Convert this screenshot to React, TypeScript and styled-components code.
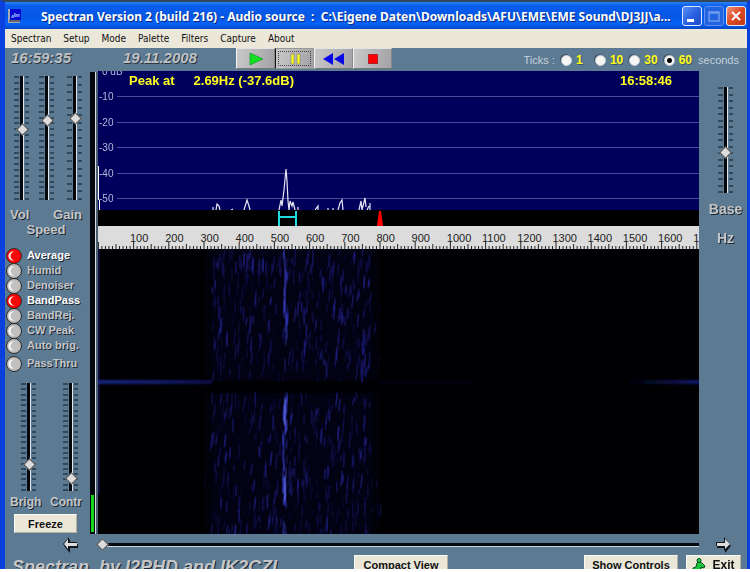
import React from "react";
import styled, { createGlobalStyle, css } from "styled-components";

const panel = "#5c7a92";
const sans = `"Liberation Sans", Arial, sans-serif`;

const GlobalStyle = createGlobalStyle`
  * { box-sizing: border-box; }
  body { margin: 0; background: #fff; font-family: ${sans}; }
  button, input { margin: 0; font: inherit; }
`;

const Window = styled.main`
  display: flex;
  flex-direction: column;
  height: calc(100vh - 3px);
  min-height: 540px;
  overflow: hidden;
  background: ${panel};
  border-style: solid;
  border-color: #33475c #0a3fd8 transparent #0a3fe0;
  border-width: 2px 3px 0 5px;
`;

const TitleBar = styled.header`
  display: flex;
  flex: none;
  align-items: center;
  height: 27px;
  padding: 0 1px 0 3px;
  color: #fff;
  background: linear-gradient(#2a80f4, #0a5eee 4px, #0456e4 14px, #0662f6 22px, #0446c8);
`;

const Title = styled.h1`
  flex: 1;
  min-width: 0;
  margin: 0 8px 0 19px;
  padding-top: 2px;
  overflow: hidden;
  font: bold 12px/20px "Noto Sans", "Open Sans", sans-serif;
  white-space: pre;
  text-overflow: ellipsis;
  text-shadow: 1px 1px 0 #0a2a80;
`;

const CaptionButton = styled.button<{ $kind?: "close" | "dim" }>`
  display: grid;
  place-items: center;
  width: 20px;
  height: 20px;
  margin-left: 2px;
  padding: 0;
  border: 1px solid ${(p) => (p.$kind === "dim" ? "#5f92ee" : "#dfe9fb")};
  border-radius: 3px;
  background: ${(p) =>
    p.$kind === "close"
      ? "linear-gradient(135deg, #f0907a, #dc4a24 50%, #c03a14)"
      : p.$kind === "dim"
      ? "#2263e0"
      : "linear-gradient(135deg, #5b8ef4, #2a62e2 50%, #1c4cc8)"};
`;

const MenuBar = styled.nav`
  display: flex;
  flex: none;
  gap: 12px;
  height: 19px;
  padding-left: 6px;
  background: #ebe8da;
`;

const MenuItem = styled.button`
  padding: 0;
  border: 0;
  color: #111;
  background: none;
  font: 10px/18px "DejaVu Sans Condensed", "DejaVu Sans", sans-serif;
`;

const ToolBar = styled.div`
  display: grid;
  grid-template-columns: 112px 119px auto 1fr;
  flex: none;
  height: 23px;
  align-items: start;
`;

const Clock = styled.time`
  padding-left: 6px;
  color: #bfc1c4;
  font: italic bold 15px/20px ${sans};
  text-shadow: 1px 1px 0 #2a3642;
`;

const Transport = styled.div`
  display: flex;
`;

const TransportButton = styled.button<{ $down?: boolean }>`
  display: grid;
  place-items: center;
  width: 39px;
  height: 21px;
  padding: 0;
  border: 1px solid;
  border-color: ${(p) => (p.$down ? "#999 #999 #999 #111" : "#e4e4e4 #888 #777 #f4f4f4")};
  background: linear-gradient(100deg, #c9c9ca, #b2b1b3 60%, #a3a2a5);
  outline: ${(p) => (p.$down ? "1px dotted #444" : "none")};
  outline-offset: -4px;
`;

const TickGroup = styled.fieldset`
  display: flex;
  align-items: center;
  justify-content: flex-end;
  gap: 6px;
  height: 24px;
  margin: 0;
  padding: 0 8px 0 0;
  border: 0;
  color: #c3d0de;
  font-size: 11px;
`;

const TickOption = styled.label`
  display: flex;
  align-items: center;
  gap: 4px;
  min-width: 28px;
  color: #ffff18;
  font: bold 12px/14px ${sans};
  text-shadow: 1px 1px 0 #44566a;
`;

const Radio = styled.input`
  appearance: none;
  width: 11px;
  height: 11px;
  border: 1px solid #c9d0d6;
  border-radius: 50%;
  background: #f6f6f4;
  box-shadow: -1px -1px 0 #44586a;
  &:checked {
    background: radial-gradient(circle, #000 2px, #f6f6f4 3px);
  }
`;

const Body = styled.div`
  display: grid;
  grid-template-columns: 85px 8px minmax(0, 1fr) 48px;
  grid-template-rows: minmax(0, 1fr) 21px;
  flex: 1;
  min-height: 0;
`;

const SidePanel = styled.section`
  display: flex;
  flex-direction: column;
  min-width: 0;
  padding-top: 5px;
`;

const embossed = css`
  color: #c4c6c8;
  text-shadow: 1px 1px 0 #1c2630;
`;

const TopSliders = styled.div`
  display: grid;
  grid-template-columns: 25px 28px 16px;
  padding-left: 9px;
`;

const BottomSliders = styled.div`
  display: grid;
  grid-template-columns: 42px 16px;
  margin-top: 12px;
  padding-left: 16px;
`;

const LabelRow = styled.div<{ $size?: number; $top?: number }>`
  display: flex;
  justify-content: space-between;
  margin-top: ${(p) => p.$top ?? 0}px;
  padding: 0 8px 0 5px;
  font: bold ${(p) => p.$size ?? 13}px/15px ${sans};
  ${embossed}
`;

const Centered = styled(LabelRow)`
  justify-content: center;
  padding: 0 3px 0 0;
`;

const SliderBox = styled.div<{ $height: number }>`
  display: grid;
  width: 16px;
  height: ${(p) => p.$height}px;
  > * {
    grid-area: 1 / 1;
  }
`;

const thumb = css`
  appearance: none;
  width: 9px;
  height: 9px;
  border: 1px solid #454545;
  background: #dcdcdc;
  transform: rotate(45deg);
`;

const VerticalRange = styled.input`
  appearance: none;
  width: 16px;
  height: 100%;
  background: linear-gradient(90deg, transparent 6px, #05080c 6px, #05080c 9px, #e0e4e8 9px, #e0e4e8 10px, transparent 10px);
  writing-mode: vertical-lr;
  direction: rtl;
  &::-webkit-slider-thumb {
    ${thumb}
  }
`;

const HorizontalRange = styled.input`
  appearance: none;
  align-self: center;
  width: 100%;
  height: 12px;
  background: linear-gradient(transparent 4px, #05080c 4px, #05080c 7px, #d0d6dc 7px, #d0d6dc 8px, transparent 8px);
  &::-webkit-slider-thumb {
    ${thumb}
  }
`;

const LedList = styled.div`
  display: flex;
  flex-direction: column;
  margin-top: 11px;
`;

const LedLabel = styled.label<{ $spaced?: boolean }>`
  display: flex;
  align-items: center;
  gap: 5px;
  height: 15px;
  margin-top: ${(p) => (p.$spaced ? 3 : 0)}px;
  padding-left: 1px;
  font: bold 11px/15px ${sans};
  white-space: nowrap;
  ${embossed}
  &:has(:checked) {
    color: #fff;
  }
`;

const Led = styled.input`
  appearance: none;
  flex: none;
  width: 16px;
  height: 16px;
  border: 1px solid #2c2c2c;
  border-radius: 50%;
  background: radial-gradient(circle at 8px 7px, #c2c1c0 4px, transparent 5px), radial-gradient(circle at 6px 7px, #fff 4px, #bdbcbb 5px);
  &:checked {
    background: radial-gradient(circle at 8px 7px, #f80808 4px, transparent 5px), radial-gradient(circle at 6px 7px, #fff 4px, #f00 5px);
  }
`;

const PlainButton = styled.button`
  display: flex;
  align-items: center;
  justify-content: center;
  gap: 6px;
  height: 19px;
  padding: 0;
  border: 1px solid;
  border-color: #fbfaf2 #b5b2a4 #b5b2a4 #fbfaf2;
  color: #111;
  background: #eae7d8;
  font: bold 11px/16px ${sans};
`;

const FreezeButton = styled(PlainButton)`
  width: 63px;
  margin: 4px 0 0 9px;
`;

const Meter = styled.div`
  display: flex;
  align-items: flex-end;
  margin-top: 1px;
  padding: 0 4px 2px 1px;
  background: linear-gradient(90deg, #04080c 5px, #d6dce0 5px, #d6dce0 6px, #4a5c70 6px);
`;

const MeterLevel = styled.div`
  width: 3px;
  height: 37px;
  background: #14d81c;
`;

const Display = styled.section`
  display: flex;
  flex-direction: column;
  min-width: 0;
  background: #000;
`;

const Spectrum = styled.div`
  position: relative;
  flex: none;
  height: 139px;
  overflow: hidden;
  background: #00005c;
`;

const Readout = styled.div`
  position: absolute;
  inset: 2px 27px auto 31px;
  display: flex;
  gap: 19px;
  color: #ffff20;
  font: bold 13px/15px ${sans};
`;

const PushRight = styled.span`
  margin-left: auto;
`;

const Drawing = styled.svg<{ $height?: number }>`
  display: block;
  flex: ${(p) => (p.$height ? "none" : "1")};
  width: 100%;
  min-height: 0;
  height: ${(p) => (p.$height ? p.$height + "px" : "100%")};
  overflow: hidden;
`;

const RightPanel = styled.section`
  display: flex;
  flex-direction: column;
  align-items: center;
  padding: 16px 0 0 5px;
`;

const BaseLabel = styled.div<{ $top: number }>`
  margin-top: ${(p) => p.$top}px;
  font: bold 14px/17px ${sans};
  ${embossed}
`;

const ScrollButton = styled.button<{ $end?: boolean }>`
  justify-self: ${(p) => (p.$end ? "center" : "end")};
  align-self: center;
  display: grid;
  width: 18px;
  height: 18px;
  margin-right: ${(p) => (p.$end ? 0 : 10)}px;
  padding: 0;
  border: 0;
  background: none;
`;

const ScrollTrack = styled.div`
  display: flex;
  grid-column: 3;
`;

const Footer = styled.footer`
  display: grid;
  grid-template-columns: 349px 94px 1fr auto auto;
  flex: none;
  align-items: start;
  height: 14px;
  overflow: hidden;
`;

const Credits = styled.div`
  padding-left: 7px;
  font: italic bold 18px/24px ${sans};
  white-space: nowrap;
  ${embossed}
`;

const ControlsButton = styled(PlainButton)`
  grid-column: 4;
  width: 94px;
  margin-right: 8px;
`;

const ExitButton = styled(PlainButton)`
  width: 55px;
  margin-right: 6px;
  font-size: 12px;
`;

type SliderProps = { name: string; value: number; height: number; ticks: number };

function Slider({ name, value, height, ticks }: SliderProps) {
  return (
    <SliderBox $height={height}>
      <svg width="16" height={height} aria-hidden="true">
        {Array.from({ length: ticks }, (_, i) => {
          const y = Math.round((i * (height - 2)) / (ticks - 1));
          return <path key={i} d={`M0 ${y + 1}h5M11 ${y + 1}h4`} stroke="#20384a" strokeWidth="1.4" />;
        })}
      </svg>
      <VerticalRange type="range" min="0" max="100" defaultValue={value} aria-label={name} />
    </SliderBox>
  );
}

function makeRandom(seed: number) {
  let s = seed;
  return () => {
    s = (s * 16807) % 2147483647;
    return s / 2147483647;
  };
}

const random = makeRandom(216);
const streaks = Array.from({ length: 820 }, () => {
  const edge = random() < 0.12;
  const x = (edge ? 104 : 114) + random() * (edge ? 180 : 160);
  const y = random() * 285;
  const length = 4 + random() * 11;
  return { x, y, length, slant: random() * 2 - 1.6, opacity: 0.1 + random() * random() * (edge ? 0.3 : 0.55) };
}).filter((s) => s.y + s.length < 134 || s.y > 143);

const signal = Array.from({ length: 75 }, (_, i) => {
  const y = i * 3.9;
  const bright = (y > 148 && y < 178) || (y > 226 && y < 250);
  return { x: 185 + random() * 4, y, length: 5 + random() * 7, opacity: bright ? 0.6 : 0.15 + random() * 0.35 };
}).filter((s) => (s.y < 88 || s.y > 144) && (s.y < 254 || s.y > 272));

function Waterfall() {
  return (
    <Drawing viewBox="0 0 601 285" preserveAspectRatio="none" role="img" aria-label="Waterfall">
      <defs>
        <filter id="soft">
          <feGaussianBlur stdDeviation="0.6 1.2" />
        </filter>
        <linearGradient id="fadeOut">
          <stop offset="0" stopColor="#1a2480" />
          <stop offset="0.6" stopColor="#101a64" />
          <stop offset="1" stopColor="#0a0e48" />
        </linearGradient>
        <linearGradient id="fadeIn">
          <stop offset="0" stopColor="#000" />
          <stop offset="1" stopColor="#10186c" />
        </linearGradient>
        <linearGradient id="haze">
          <stop offset="0" stopColor="#000003" />
          <stop offset="0.08" stopColor="#020212" />
          <stop offset="0.92" stopColor="#020212" />
          <stop offset="1" stopColor="#000003" />
        </linearGradient>
      </defs>
      <rect width="601" height="285" fill="#000003" />
      <rect x="104" width="180" height="132" fill="url(#haze)" />
      <rect x="104" y="144" width="180" height="141" fill="url(#haze)" />
      <g filter="url(#soft)" strokeLinecap="round">
        {streaks.map((s, i) => (
          <path key={i} d={`M${s.x} ${s.y}l${s.slant} ${s.length}`} stroke="#2c2cb4" strokeWidth="1.8" opacity={s.opacity} />
        ))}
        {signal.map((s, i) => (
          <path key={i} d={`M${s.x} ${s.y}v${s.length}`} stroke="#3c44d0" strokeWidth="2" opacity={s.opacity} />
        ))}
        <path d="M187 150v26M187 228v22" stroke="#5866dc" strokeWidth="1.4" />
        <path d="M1 0v245" stroke="#0c0c50" strokeWidth="1.5" />
        <rect x="0" y="131" width="114" height="4" fill="url(#fadeOut)" />
        <rect x="525" y="131" width="76" height="4" fill="url(#fadeIn)" />
        <path d="M282 133h92" stroke="#04041e" strokeWidth="2" />
      </g>
    </Drawing>
  );
}

const SPAN = 601;
const pct = (x: number) => `${(x / SPAN) * 100}%`;

function SpectrumPlot() {
  return (
    <Spectrum>
      <Drawing $height={139} role="img" aria-label="Spectrum">
        {["0 dB", "-10", "-20", "-30", "-40", "-50"].map((text, i) => {
          const y = Math.round(i * 25.4);
          return (
            <g key={text}>
              {i > 0 && <line x1="19" x2="100%" y1={y + 0.5} y2={y + 0.5} stroke="#4a4a98" />}
              <text x={i ? 1 : 4} y={y + 4} fill="#b4b8d8" fontSize="10" fontFamily="Liberation Sans">{text}</text>
            </g>
          );
        })}
        <svg viewBox="0 0 601 139" width="100%" height="139" preserveAspectRatio="none">
          <path d="M0.5 95v34M1.5 129v10" stroke="#fff" fill="none" />
          <path
            d="M115 139v-3M118 139l1-6 2 2 1 4M133 139l2-1M146 139l3-10 2 6 1 4M181 139l2-10 1 6 2-16 2-21 1 12 1 20 1 9M191 139l1-9 2 5 1-4 2 8M200 139v-3M217 139l3-4v4M230 139v-2M235 139v-2M240 139l2-7 2-3 1 10M261 139l2-9 1 9M264 139l3-12 1 9M269 139l2-4M272 139v-7"
            fill="none"
            stroke="#e6e6f4"
            strokeWidth="1.2"
          />
        </svg>
      </Drawing>
      <Readout>
        <span>Peak at</span>
        <span>2.69Hz (-37.6dB)</span>
        <PushRight>16:58:46</PushRight>
      </Readout>
    </Spectrum>
  );
}

function Markers() {
  return (
    <Drawing $height={16} viewBox="0 0 601 16" preserveAspectRatio="none" aria-label="Passband markers" role="img">
      <path d="M181 1v15M198 1v15M181 7h17" stroke="#20dce0" strokeWidth="2" fill="none" />
      <path d="M281 1h2l2 15h-6z" fill="#f00" />
    </Drawing>
  );
}

function Ruler() {
  return (
    <Drawing $height={23} role="img" aria-label="Frequency scale">
      <rect width="100%" height="23" fill="#dcdcdc" />
      {Array.from({ length: 171 }, (_, i) => {
        const x = pct(0.4 + i * 3.52);
        const size = i % 10 === 0 ? 7 : i % 5 === 0 ? 5 : 3;
        return <line key={i} x1={x} x2={x} y1={23 - size} y2="23" stroke="#222" />;
      })}
      {Array.from({ length: 17 }, (_, i) => (
        <text key={i} x={pct(32 + i * 35.2)} y="16" fill="#222" fontSize="11" fontFamily="Liberation Sans">
          {(i + 1) * 100}
        </text>
      ))}
    </Drawing>
  );
}

function Arrow({ left }: { left?: boolean }) {
  const shape = left ? "M1 8l6-7v5h8v4H7v5z" : "M16 8l-6-7v5H2v4h8v5z";
  return (
    <svg width="18" height="18" viewBox="0 0 18 18" aria-hidden="true">
      <path d={shape} fill="#10161c" transform="translate(1 2)" />
      <path d={shape} fill="#10161c" />
      <path d={left ? "M2 8l4-5v4h9v3H6v3z" : "M16 8l-5-5v4H3v3h8v3z"} fill="#dcdee0" />
    </svg>
  );
}

const leds = ["Average", "Humid", "Denoiser", "BandPass", "BandRej.", "CW Peak", "Auto brig.", "PassThru"];
const menus = ["Spectran", "Setup", "Mode", "Palette", "Filters", "Capture", "About"];

export default function App() {
  return (
    <>
      <GlobalStyle />
      <Window>
        <TitleBar>
          <svg width="14" height="14" viewBox="0 0 14 14" aria-hidden="true">
            <path d="M0 0h3v11h9v3H0z" fill="#a7a9b4" />
            <path d="M2 0h11v11H2z" fill="#0808d0" />
            <path d="M4 9V7l1-1v3l2-5v4l2-3v3l2-3v3" fill="none" stroke="#80a4ff" />
            <path d="M1 12h11" stroke="#222" />
          </svg>
          <Title>{"Spectran Version 2 (build 216) - Audio source  :  C:\\Eigene Daten\\Downloads\\AFU\\EME\\EME Sound\\DJ3JJ\\a..."}</Title>
          <CaptionButton aria-label="Minimize">
            <svg width="16" height="16"><path d="M3 11h7v3H3z" fill="#fff" /></svg>
          </CaptionButton>
          <CaptionButton $kind="dim" aria-label="Maximize">
            <svg width="16" height="16"><path d="M3 4h10v9H3zM3 5h10" fill="none" stroke="#6f9cf0" strokeWidth="1.5" /></svg>
          </CaptionButton>
          <CaptionButton $kind="close" aria-label="Close">
            <svg width="16" height="16"><path d="M4 4l8 8M12 4l-8 8" stroke="#fff" strokeWidth="2" /></svg>
          </CaptionButton>
        </TitleBar>
        <MenuBar>{menus.map((m) => <MenuItem key={m}>{m}</MenuItem>)}</MenuBar>
        <ToolBar>
          <Clock>16:59:35</Clock>
          <Clock>19.11.2008</Clock>
          <Transport>
            <TransportButton aria-label="Play">
              <svg width="16" height="14"><path d="M2 1l13 6-13 6z" fill="#10e020" stroke="#189830" strokeWidth=".7" /></svg>
            </TransportButton>
            <TransportButton $down aria-label="Pause">
              <svg width="14" height="12"><path d="M3 1h3v10H3zM9 1h3v10H9z" fill="#ffff10" stroke="#85857a" strokeWidth=".7" /></svg>
            </TransportButton>
            <TransportButton aria-label="Rewind">
              <svg width="24" height="14"><path d="M11 1v12L1 7zM22 1v12L12 7z" fill="#0808e8" /></svg>
            </TransportButton>
            <TransportButton aria-label="Stop">
              <svg width="10" height="10"><path d="M.5.5h9v9h-9z" fill="#f00" stroke="#b02030" /></svg>
            </TransportButton>
          </Transport>
          <TickGroup aria-label="Ticks in seconds">
            <span>Ticks :</span>
            {[1, 10, 30, 60].map((n) => (
              <TickOption key={n}>
                <Radio type="radio" name="ticks" defaultChecked={n === 60} />
                {n}
              </TickOption>
            ))}
            <span>seconds</span>
          </TickGroup>
        </ToolBar>
        <Body>
          <SidePanel>
            <TopSliders>
              <Slider name="Vol" value={57} height={124} ticks={22} />
              <Slider name="Speed" value={65} height={124} ticks={22} />
              <Slider name="Gain" value={67} height={124} ticks={17} />
            </TopSliders>
            <LabelRow $top={7}>
              <span>Vol</span>
              <span>Gain</span>
            </LabelRow>
            <Centered>Speed</Centered>
            <LedList>
              {leds.map((name, i) => (
                <LedLabel key={name} $spaced={i === 7}>
                  <Led type="checkbox" defaultChecked={i === 0 || i === 3} />
                  {name}
                </LedLabel>
              ))}
            </LedList>
            <BottomSliders>
              <Slider name="Brightness" value={22} height={108} ticks={21} />
              <Slider name="Contrast" value={8} height={108} ticks={21} />
            </BottomSliders>
            <LabelRow $size={12} $top={4}>
              <span>Brigh</span>
              <span>Contr</span>
            </LabelRow>
            <FreezeButton>Freeze</FreezeButton>
          </SidePanel>
          <Meter>
            <MeterLevel />
          </Meter>
          <Display>
            <SpectrumPlot />
            <Markers />
            <Ruler />
            <Waterfall />
          </Display>
          <RightPanel>
            <Slider name="Base" value={37} height={106} ticks={17} />
            <BaseLabel $top={8}>Base</BaseLabel>
            <BaseLabel $top={12}>Hz</BaseLabel>
          </RightPanel>
          <ScrollButton aria-label="Scroll left">
            <Arrow left />
          </ScrollButton>
          <ScrollTrack>
            <HorizontalRange type="range" min="0" max="100" defaultValue={0} aria-label="Frequency offset" />
          </ScrollTrack>
          <ScrollButton $end aria-label="Scroll right">
            <Arrow />
          </ScrollButton>
        </Body>
        <Footer>
          <Credits>Spectran, by I2PHD and IK2CZL</Credits>
          <PlainButton>Compact View</PlainButton>
          <ControlsButton>Show Controls</ControlsButton>
          <ExitButton>
            <svg width="14" height="14" viewBox="0 0 14 14" aria-hidden="true">
              <path d="M7 3l3 2 3 3-1 2-3-1v2l3 2H8l-3-1-4 1v-3l3-1 1-4z" fill="#18c83c" stroke="#064a18" />
              <circle cx="7" cy="2.5" r="2" fill="#18c83c" stroke="#064a18" />
            </svg>
            Exit
          </ExitButton>
        </Footer>
      </Window>
    </>
  );
}
